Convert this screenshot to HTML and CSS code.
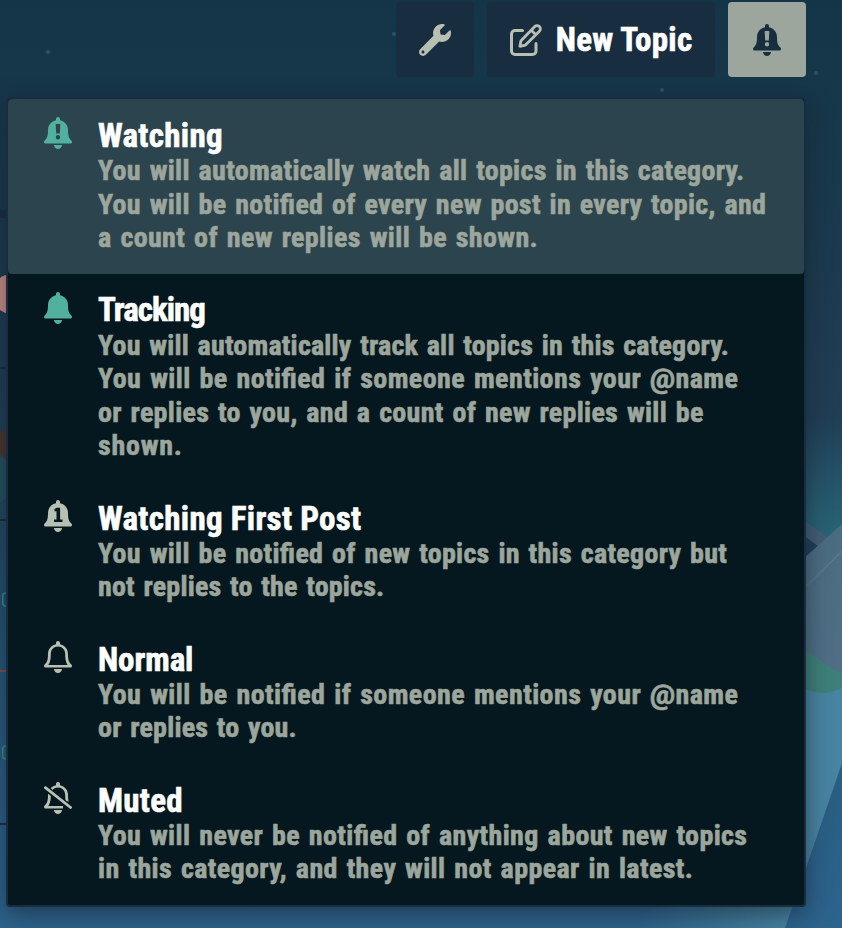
FILE: index.html
```html
<!DOCTYPE html>
<html lang="en">
<head>
<meta charset="utf-8">
<title>Category notifications</title>
<link rel="stylesheet" href="styles.css">
</head>
<body>
<svg class="scene" viewBox="0 0 842 928" aria-hidden="true">
  <defs>
    <linearGradient id="sky" x1="0" y1="0" x2="0" y2="1">
      <stop offset="0" stop-color="#143447"/><stop offset=".12" stop-color="#17374a"/>
      <stop offset=".45" stop-color="#203e55"/><stop offset=".75" stop-color="#27597b"/><stop offset="1" stop-color="#2d648e"/>
    </linearGradient>
    <linearGradient id="teal" x1="0" y1="0" x2="0" y2="1">
      <stop offset="0" stop-color="#286372" stop-opacity="0"/><stop offset="1" stop-color="#2a6b79"/>
    </linearGradient>
    <linearGradient id="slab" x1="0" y1="0" x2="0" y2="1">
      <stop offset="0" stop-color="#4b6c80"/><stop offset="1" stop-color="#506f87"/>
    </linearGradient>
    <linearGradient id="beam" gradientUnits="userSpaceOnUse" x1="640" y1="0" x2="790" y2="0">
      <stop offset="0" stop-color="#4784a1" stop-opacity="0"/><stop offset="1" stop-color="#4784a1"/>
    </linearGradient>
  </defs>
  <rect width="842" height="928" fill="url(#sky)"/>
  <g fill="#2c5365"><circle cx="48" cy="52" r="2"/><circle cx="394" cy="34" r="2"/><circle cx="662" cy="90" r="2"/><circle cx="816" cy="73" r="2"/></g>
  <path d="M780 420H842V560H780z" fill="url(#teal)"/>
  <path d="M640 610H842V763L806 868L785 928H640z" fill="url(#beam)"/>
  <ellipse cx="823" cy="658" rx="36" ry="35" fill="#3e8079"/>
  <path d="M800 518L832 540L818 549L800 536z" fill="#435e74"/>
  <path d="M800 533L818 546L800 562z" fill="#1d405a"/>
  <path d="M842 524L790 571V640L842 675z" fill="url(#slab)"/>
  <path d="M842 551L795 597" stroke="#5a788b" stroke-width="1.5"/>
  <path d="M0 210h6v8H0z" fill="#192d40"/>
  <circle cx="12" cy="294" r="20" fill="#cd8f8b"/>
  <path d="M0 458L6 430V498L0 503z" fill="#24515d"/>
  <circle cx="19" cy="444" r="21" fill="#4b342e"/>
  <path d="M0 367h6v2H0zM0 519h6v2H0zM0 823h6v2H0z" fill="#182c3e"/>
  <path d="M0 670h6v2H0z" fill="#88503c"/>
  <g fill="none" stroke="#3c8d88" stroke-width="1.5"><rect x="2.700" y="593" width="12" height="13" rx="3"/><rect x="2.700" y="746" width="12" height="13" rx="3"/></g>
</svg>

<svg class="defs" aria-hidden="true">
  <symbol id="bell" viewBox="0 0 28 32">
    <path d="M14 0c1.100 0 2 .9 2 2v1.200c4.700.9 8 4.900 8 9.800 0 6.400 1 8.200 3.400 10.600 1.200 1.300.4 3-1.300 3H1.900c-1.700 0-2.500-1.700-1.300-3C3 21.200 4 19.400 4 13c0-4.900 3.300-8.900 8-9.800V2c0-1.100.9-2 2-2zM10 28h8c0 2.200-1.800 4-4 4s-4-1.800-4-4z"/>
  </symbol>
  <symbol id="bell-exclamation" viewBox="0 0 28 32">
    <path fill-rule="evenodd" d="M14 0c1.100 0 2 .9 2 2v1.200c4.700.9 8 4.900 8 9.800 0 6.400 1 8.200 3.400 10.600 1.200 1.300.4 3-1.300 3H1.900c-1.700 0-2.500-1.700-1.300-3C3 21.200 4 19.400 4 13c0-4.900 3.300-8.900 8-9.800V2c0-1.100.9-2 2-2zM10 28h8c0 2.200-1.800 4-4 4s-4-1.800-4-4zM12.300 7q-.7 0-.6.700l.5 8.200q0 .6.600.6h2.400q.6 0 .6-.6l.5-8.200q.1-.7-.6-.7zM14 18.100a2.200 2.200 0 1 0 0 4.400 2.200 2.200 0 0 0 0-4.400z"/>
  </symbol>
  <symbol id="bell-one" viewBox="0 0 28 32">
    <path fill-rule="evenodd" d="M14 0c1.100 0 2 .9 2 2v1.200c4.700.9 8 4.900 8 9.800 0 6.400 1 8.200 3.400 10.600 1.200 1.300.4 3-1.300 3H1.900c-1.700 0-2.500-1.700-1.300-3C3 21.200 4 19.400 4 13c0-4.900 3.300-8.900 8-9.800V2c0-1.100.9-2 2-2zM10 28h8c0 2.200-1.800 4-4 4s-4-1.800-4-4zM12.800 7.800 10.500 9v2.300h2v8.200H10V22h8.500v-2.500h-2.400V7.800z"/>
  </symbol>
  <symbol id="bell-outline" viewBox="0 0 28 32">
    <path fill-rule="evenodd" d="M14 0c1.100 0 2 .9 2 2v1.200c4.700.9 8 4.900 8 9.800 0 6.400 1 8.200 3.400 10.600 1.200 1.300.4 3-1.300 3H1.900c-1.700 0-2.500-1.700-1.300-3C3 21.200 4 19.400 4 13c0-4.900 3.300-8.900 8-9.800V2c0-1.100.9-2 2-2zM14 5.600c-4.200 0-7.200 3.200-7.200 7.400 0 5.800-.7 8.200-2.500 11h19.400c-1.800-2.800-2.500-5.200-2.500-11 0-4.200-3-7.400-7.200-7.400zM10 28h8c0 2.200-1.800 4-4 4s-4-1.800-4-4z"/>
  </symbol>
  <mask id="cut" maskUnits="userSpaceOnUse" x="0" y="0" width="28" height="32"><path fill="#fff" d="M0 0h28v32H0z"/><path d="M-1 4L23 23" stroke="#000" stroke-width="6"/><path d="M19 19.500h9V28h-9z"/></mask>
  <symbol id="bell-slash" viewBox="0 0 28 32">
    <use href="#bell-outline" width="28" height="32" mask="url(#cut)"/>
    <path d="M1.400 5.700L26.600 25.500" stroke="currentColor" stroke-width="2.800" stroke-linecap="round"/>
  </symbol>
</svg>

<nav class="toolbar">
  <button class="btn btn-icon" aria-label="Tools"><svg class="icon-lg" viewBox="0 0 512 512"><path d="M507.730 109.100c-2.240-9.030-13.540-12.090-20.120-5.510l-74.360 74.360-67.880-11.310-11.310-67.880 74.360-74.360c6.620-6.620 3.430-17.900-5.660-20.160-47.380-11.740-99.550.91-136.580 37.930-39.640 39.640-50.550 97.100-34.050 147.200L18.740 402.760c-24.990 24.990-24.990 65.510 0 90.500 24.990 24.990 65.510 24.990 90.500 0l213.210-213.210c50.120 16.710 107.470 5.680 147.370-34.220 37.070-37.070 49.700-89.320 37.910-136.730zM64 472c-13.250 0-24-10.750-24-24 0-13.260 10.750-24 24-24s24 10.740 24 24c0 13.250-10.750 24-24 24z"/></svg></button>
  <button class="btn btn-topic"><svg class="icon-lg" viewBox="0 0 32 32"><g fill="none" stroke="currentColor" stroke-width="3" stroke-linejoin="round"><path stroke-linecap="round" d="M12.500 6.500H5a3.500 3.500 0 0 0-3.500 3.500v17A3.500 3.500 0 0 0 5 30.500h17.500A3.500 3.500 0 0 0 26 27v-7.500"/><path stroke-width="2.800" d="M9.900 22.300L11 16.700 24.800 2.600a3.200 3.200 0 0 1 4.600 4.600L15.500 21.100zM21.300 6.300l4.500 4.500"/></g></svg><span>New Topic</span></button>
  <button class="btn btn-icon btn-active" aria-label="Notifications"><svg class="icon"><use href="#bell-exclamation"/></svg></button>
</nav>

<ul class="menu">
  <li class="item selected">
    <svg class="icon"><use href="#bell-exclamation"/></svg>
    <div><h3>Watching</h3>
    <p><span class="ls3">You will automatically watch all topics in this category.</span><span class="ls3">You will be notified of every new post in every topic, and</span><span class="ls4">a count of new replies will be shown.</span></p></div>
  </li>
  <li class="item tracking">
    <svg class="icon"><use href="#bell"/></svg>
    <div><h3 class="tight">Tracking</h3>
    <p><span class="ls2">You will automatically track all topics in this category.</span><span class="ls5">You will be notified if someone mentions your <b>@</b>name</span><span class="ls3">or replies to you, and a count of new replies will be</span><span class="ls7">shown.</span></p></div>
  </li>
  <li class="item">
    <svg class="icon"><use href="#bell-one"/></svg>
    <div><h3>Watching First Post</h3>
    <p><span class="ls3">You will be notified of new topics in this category but</span><span class="ls2">not replies to the topics.</span></p></div>
  </li>
  <li class="item">
    <svg class="icon"><use href="#bell-outline"/></svg>
    <div><h3 class="plain">Normal</h3>
    <p><span class="ls5">You will be notified if someone mentions your <b>@</b>name</span><span class="ls2">or replies to you.</span></p></div>
  </li>
  <li class="item">
    <svg class="icon"><use href="#bell-slash"/></svg>
    <div><h3>Muted</h3>
    <p><span class="ls4">You will never be notified of anything about new topics</span><span class="ls4">in this category, and they will not appear in latest.</span></p></div>
  </li>
</ul>
</body>
</html>
```
FILE: styles.css
```css
* { box-sizing: border-box; }
body {
  margin: 0;
  height: 928px;
  overflow: hidden;
  background: #17374a;
  font-family: Roboto, sans-serif;
  font-weight: 700;
  font-stretch: 75%;
  font-feature-settings: "liga" 1;
  -webkit-text-stroke: .6px;
}
.scene { position: absolute; inset: 0; width: 842px; height: 928px; z-index: -1; }
.defs { position: absolute; width: 0; height: 0; }
svg { fill: currentColor; flex: none; }
.icon { width: 28px; height: 32px; }
.icon-lg { width: 32px; height: 32px; }

.toolbar {
  display: flex;
  justify-content: flex-end;
  gap: 13px;
  padding: 2px 36px 0 0;
}
.btn {
  display: flex;
  align-items: center;
  justify-content: center;
  height: 75px;
  padding: 0;
  border: 0;
  border-radius: 4px;
  background: #192d40;
  color: #b7c0b3;
  font: inherit;
  font-size: 33px;
}
.btn-icon { width: 78px; }
.btn-topic { width: 228px; gap: 14px; }
.btn-topic span { color: #fff; letter-spacing: .25px; }
.btn-active { background: #9ca69c; color: #192d40; }

.menu {
  width: 800px;
  margin: 20px 0 0 6px;
  padding: 0;
  border: 2px solid #192d40;
  border-radius: 4px;
  background: #06181f;
  list-style: none;
  box-shadow: 0 8px 24px rgba(20, 30, 38, .55);
}
.item {
  display: flex;
  gap: 26px;
  padding: 18px 20px 19px 36px;
  color: #b7c0b3;
  border-radius: 4px;
}
.item > div { padding-top: .9px; }
.item.selected { background: #2c444d; }
.item.selected, .item.tracking { color: #52b09f; }
h3 {
  margin: 0;
  color: #fff;
  font-size: 33px;
  line-height: 36.2px;
  letter-spacing: .3px;
}
h3.tight { letter-spacing: -1px; }
h3.plain { letter-spacing: -.1px; }
p {
  margin: 0;
  color: #9ca69c;
  font-size: 28px;
  line-height: 33.5px;
  word-spacing: 2px;
  white-space: nowrap;
}
p span { display: block; }
b { font-stretch: 95%; }
.ls2 { letter-spacing: .2px; }
.ls3 { letter-spacing: .31px; }
.ls4 { letter-spacing: .38px; }
.ls5 { letter-spacing: .42px; }
.ls7 { letter-spacing: .75px; }
```
